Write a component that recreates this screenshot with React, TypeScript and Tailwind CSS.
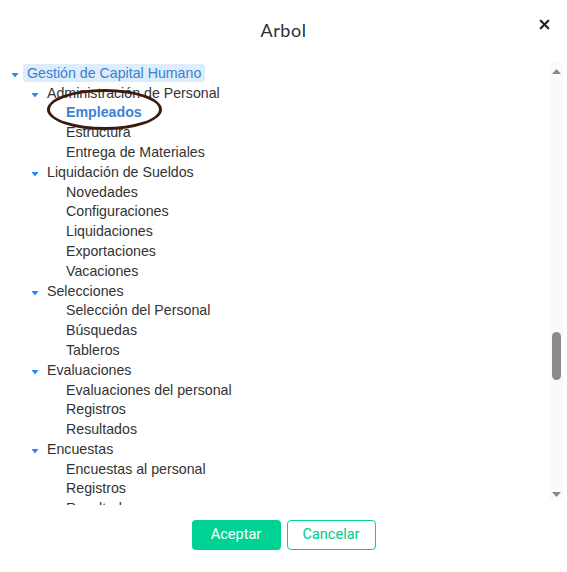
import { X } from 'lucide-react';

type Node = { label: string; level: number; open?: boolean; selected?: boolean; active?: boolean };

const nodes: Node[] = [
  { label: 'Gestión de Capital Humano', level: 0, open: true, selected: true },
  { label: 'Administración de Personal', level: 1, open: true },
  { label: 'Empleados', level: 2, active: true },
  { label: 'Estructura', level: 2 },
  { label: 'Entrega de Materiales', level: 2 },
  { label: 'Liquidación de Sueldos', level: 1, open: true },
  { label: 'Novedades', level: 2 },
  { label: 'Configuraciones', level: 2 },
  { label: 'Liquidaciones', level: 2 },
  { label: 'Exportaciones', level: 2 },
  { label: 'Vacaciones', level: 2 },
  { label: 'Selecciones', level: 1, open: true },
  { label: 'Selección del Personal', level: 2 },
  { label: 'Búsquedas', level: 2 },
  { label: 'Tableros', level: 2 },
  { label: 'Evaluaciones', level: 1, open: true },
  { label: 'Evaluaciones del personal', level: 2 },
  { label: 'Registros', level: 2 },
  { label: 'Resultados', level: 2 },
  { label: 'Encuestas', level: 1, open: true },
  { label: 'Encuestas al personal', level: 2 },
  { label: 'Registros', level: 2 },
  { label: 'Resultados', level: 2 },
];

const indent = ['pl-[11px]', 'pl-[31px]', 'pl-[66px]'];

function Caret() {
  return (
    <svg width="8" height="6" viewBox="0 0 8 6" className="mt-[3px] mr-[8px] shrink-0">
      <path d="M0.5 1 L7.5 1 L4 5.5 Z" fill="#1a8cff" />
    </svg>
  );
}

function TreeRow({ node }: { node: Node }) {
  return (
    <div className={`relative flex items-center h-[19.8px] ${indent[node.level]}`}>
      {node.open && <Caret />}
      {node.selected ? (
        <span className="bg-[#ddedfb] text-[#3a80d2] rounded-[3px] px-[4px] -ml-[4px] leading-[18px]">
          {node.label}
        </span>
      ) : node.active ? (
        <>
          <span className="font-bold text-[#3d82d6]">{node.label}</span>
          <span className="absolute left-[47px] top-[-14px] w-[115px] h-[41px] rounded-[50%] border-[3px] border-[#3b1a10]" />
        </>
      ) : (
        <span>{node.label}</span>
      )}
    </div>
  );
}

export default function App() {
  return (
    <div className="w-[567px] h-[572px] bg-white flex flex-col font-['Liberation_Sans',Arial,sans-serif]">
      <div className="relative h-[62px] flex items-start justify-center pt-[17px]">
        <h1 className="text-[18px] text-[#2d2d33] font-['Lato','Noto_Sans',sans-serif] tracking-[0.6px]">Arbol</h1>
        <button className="absolute right-[15px] top-[17px] text-[#222]">
          <X className="w-[15px] h-[15px]" strokeWidth={3.5} />
        </button>
      </div>

      <div className="flex h-[443px]">
        <div className="flex-1 overflow-hidden pt-[1.5px] text-[14.2px] text-[#333]">
          {nodes.map((n, i) => (
            <TreeRow key={i} node={n} />
          ))}
        </div>
        <div className="w-[14px] mr-[4px] mb-[4px] bg-[#fafafa] flex flex-col items-center pt-[7px]">
          <svg width="9" height="5" viewBox="0 0 9 5">
            <path d="M0 5 L4.5 0 L9 5 Z" fill="#888" />
          </svg>
          <div className="mt-[258px] w-[9px] h-[48px] rounded-full bg-[#8a8a8a]" />
          <div className="flex-1" />
          <svg width="9" height="5" viewBox="0 0 9 5" className="mb-[4px]">
            <path d="M0 0 L9 0 L4.5 5 Z" fill="#888" />
          </svg>
        </div>
      </div>

      <div className="flex justify-center gap-[6px] pt-[15px] font-['Roboto',sans-serif] text-[14.5px]">
        <button className="w-[89px] h-[30px] rounded-[4px] bg-[#00d293] text-white">Aceptar</button>
        <button className="w-[89px] h-[30px] rounded-[4px] border border-[#00d293] text-[#00c98c]">Cancelar</button>
      </div>
    </div>
  );
}
